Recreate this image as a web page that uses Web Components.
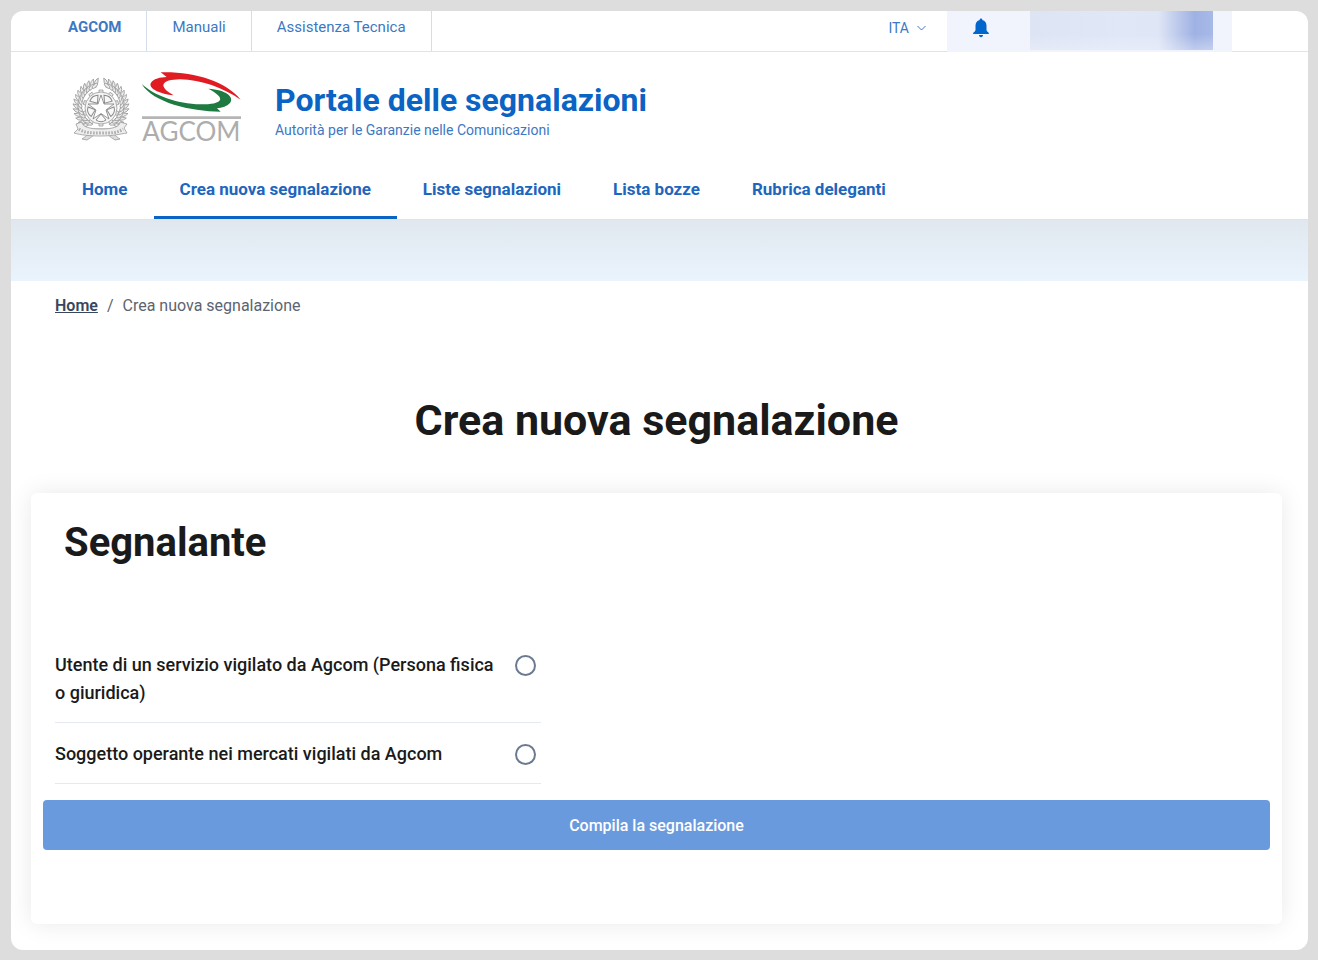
<!DOCTYPE html>
<html lang="it">
<head>
<meta charset="utf-8">
<meta name="viewport" content="width=device-width, initial-scale=1">
<title>Portale delle segnalazioni</title>
<style>
  body {
    margin: 0;
    padding: 11px 10px 10px 11px;
    min-height: 100vh;
    box-sizing: border-box;
    display: flex;
    background: #dddddd;
    color: #1a1a1a;
    font-family: Roboto, "Liberation Sans", sans-serif;
    --blue: #0b63c4;
    --soft-blue: #3d78c2;
    --line: #dbe5ef;
  }
</style>
</head>
<body>
<portal-page>
  <top-bar slot="top">
    <top-link strong>AGCOM</top-link>
    <top-link>Manuali</top-link>
    <top-link>Assistenza Tecnica</top-link>
  </top-bar>
  <brand-header slot="header">
    Portale delle segnalazioni
    <span slot="tagline">Autorità per le Garanzie nelle Comunicazioni</span>
  </brand-header>
  <main-nav slot="header">
    <nav-item>Home</nav-item>
    <nav-item active>Crea nuova segnalazione</nav-item>
    <nav-item>Liste segnalazioni</nav-item>
    <nav-item>Lista bozze</nav-item>
    <nav-item>Rubrica deleganti</nav-item>
  </main-nav>
  <bread-crumb current="Crea nuova segnalazione"></bread-crumb>
  <page-title>Crea nuova segnalazione</page-title>
  <report-card>Segnalante</report-card>
</portal-page>

<script>
class BaseElement extends HTMLElement {
  constructor() {
    super();
    this.attachShadow({ mode: "open" });
    this.shadowRoot.innerHTML = this.template();
  }
}

class PortalPage extends BaseElement {
  template() {
    return `
      <style>
        :host {
          display: flex;
          flex-direction: column;
          flex: 1;
          min-width: 0;
          background: #ffffff;
          border-radius: 12px;
          overflow: hidden;
        }
        .hero {
          height: 61px;
          border-top: 1px solid #dde4ec;
          background: linear-gradient(#e0e7ef, #eaf4fd);
        }
        main {
          flex: 1;
          padding: 0 26px 26px 20px;
        }
      </style>
      <slot name="top"></slot>
      <header><slot name="header"></slot></header>
      <div class="hero"></div>
      <main><slot></slot></main>
    `;
  }
}

class TopLink extends BaseElement {
  template() {
    return `
      <style>
        :host {
          display: flex;
          border-right: 1px solid #d3deea;
        }
        a {
          padding: 6px 25px 0;
          font-size: 15px;
          line-height: 20px;
          color: var(--soft-blue);
          text-decoration: none;
        }
        :host([strong]) a { font-weight: 700; }
      </style>
      <a href="#"><slot></slot></a>
    `;
  }
}

class TopBar extends BaseElement {
  template() {
    return `
      <style>
        :host {
          display: flex;
          height: 40px;
          border-bottom: 1px solid var(--line);
          padding: 0 76px 0 32px;
        }
        nav { display: flex; flex: 1; }
        .lang {
          display: flex;
          align-items: center;
          gap: 8px;
          height: 34px;
          padding: 0 21px;
          border: 0;
          background: none;
          font: 14px Roboto, sans-serif;
          color: var(--soft-blue);
        }
        .user {
          display: flex;
          margin-bottom: -1px;
          background: #f1f4fc;
          padding-right: 19px;
        }
        .bell {
          width: 83px;
          height: 34px;
          padding: 0 16px 0 0;
          border: 0;
          background: none;
        }
        .bell svg { display: block; margin: auto; }
        .account {
          width: 183px;
          height: 39px;
          background:
            linear-gradient(transparent 60%, rgba(241, 244, 252, 0.4)),
            linear-gradient(90deg, #dde4f4, #e0e7f7 50%, #dfe6f6 70%, #b9c6ea 82%, #9fb2e4 90%, #a8b9e7);
        }
      </style>
      <nav aria-label="Link utili"><slot></slot></nav>
      <button class="lang" type="button">ITA
        <svg width="9" height="6" viewBox="0 0 9 6" fill="none" stroke="currentColor"><path d="M.5 1l4 4 4-4"/></svg>
      </button>
      <div class="user">
        <button class="bell" type="button" aria-label="Notifiche">
          <svg width="18" height="20" viewBox="0 0 18 20" fill="#0066cc">
            <path d="M9 .5c.8 0 1.300.6 1.300 1.400 2.700.6 4.200 2.800 4.200 5.600v4.200c0 1.200.8 2 2.200 3.100.5.4.4 1.200-.4 1.200H1.700c-.8 0-.9-.8-.4-1.200 1.400-1.100 2.200-1.900 2.200-3.100V7.500c0-2.800 1.500-5 4.200-5.600C7.700 1.100 8.200.5 9 .5z"/>
            <path d="M7 17h4c0 1.300-.8 2.200-2 2.200S7 18.300 7 17z"/>
          </svg>
        </button>
        <div class="account"></div>
      </div>
    `;
  }
}

class RepublicEmblem extends BaseElement {
  // one side of the wreath; the other side is its mirror image
  leaves() {
    let out = "";
    for (let i = 0; i < 14; i++) {
      out += `<g transform="rotate(${148 - i * 10}) translate(0 -22)">
        <path d="M0 3q-5 -3 -7 -7q7 0 7 7z" transform="rotate(12)"/>
        <ellipse cy="1" rx="3.500" ry="1.500" transform="rotate(25)"/>
      </g>`;
    }
    return out;
  }

  // wedges of the wheel that show between the points of the star
  wedges() {
    let out = "";
    for (let i = 0; i < 5; i++) {
      out += `<path d="M0 -6l-5 -6q5 -3.500 10 0z" transform="translate(27 30) rotate(${36 + i * 72})"/>`;
    }
    return out;
  }

  teeth() {
    let out = "";
    for (let i = 0; i < 10; i++) {
      out += `<path d="M-2 -15v-3h4v3" transform="translate(27 30) rotate(${i * 36})"/>`;
    }
    return out;
  }

  template() {
    return `
      <style>
        :host { display: block; }
        svg { display: block; overflow: visible; }
      </style>
      <svg width="56" height="64" viewBox="0 0 56 64" fill="#ececec" stroke="#9a9a9a" stroke-width=".8" role="img" aria-label="Repubblica Italiana">
        <g transform="translate(27 28)">${this.leaves()}</g>
        <g transform="translate(27 28) scale(-1 1)">${this.leaves()}</g>
        ${this.teeth()}
        <circle cx="27" cy="30" r="16" fill="#f4f4f4"/>
        <g fill="#f8f8f8" stroke="#8c8c8c" stroke-width="1">${this.wedges()}</g>
        <path d="M27 17l3 9h10l-8 6 3 9-8-5.500-8 5.500 3-9-8-6h10z" fill="#fff" stroke="#7f7f7f"/>
        <path d="M18 51c-4 6-7 8-10 10l5 1c5-3 9-7 14-11 5 4 9 8 14 11l5-1c-3-2-6-4-10-10z" fill="#ddd"/>
        <path d="M2 46l6-2c0 5 8 7 19 7s19-2 19-7l7 2-3 4 3 5c-7 1-14 3-26 3S7 57 0 55l4-4z" fill="#eee"/>
        <path d="M5 51c5 4 12 4 22 4s17 0 22-4" fill="none" stroke="#aaa" stroke-width="3" stroke-dasharray="1.500 1.500"/>
      </svg>
    `;
  }
}

class AgcomLogo extends BaseElement {
  template() {
    return `
      <style>
        :host { display: block; }
        svg { display: block; overflow: visible; }
        text { font: 78px Lato, sans-serif; fill: #adadad; }
      </style>
      <svg width="100" height="72" viewBox="9 6 300 216" role="img" aria-label="AGCOM">
        <path fill="#e01b22" d="M68 13C165 10 262 38 308 95C254 59 190 35 126 34C70 35 58 55 107 82C58 77 28 59 40 43C48 32 66 28 86 27Z"/>
        <path fill="#1f7a41" d="M11 48C48 82 116 108 188 109C254 109 268 92 211 62C264 65 290 87 276 105C267 115 252 120 237 121L248 131C156 130 46 104 11 48Z"/>
        <path fill="#b5b5b5" d="M12 145h297v8H12z"/>
        <text x="160" y="218" text-anchor="middle">AGCOM</text>
      </svg>
    `;
  }
}

class BrandHeader extends BaseElement {
  template() {
    return `
      <style>
        :host {
          display: flex;
          align-items: flex-start;
          padding: 18px 63px 0;
        }
        republic-emblem { margin: 8px 11px 0 0; }
        agcom-logo { margin-right: 34px; }
        a {
          color: var(--blue);
          text-decoration: none;
          padding-top: 10px;
        }
        .name {
          font-size: 32px;
          line-height: 40px;
          font-weight: 700;
        }
        .tagline {
          font-size: 14px;
          line-height: 20px;
          color: var(--soft-blue);
        }
      </style>
      <republic-emblem></republic-emblem>
      <agcom-logo></agcom-logo>
      <a href="#">
        <div class="name"><slot></slot></div>
        <div class="tagline"><slot name="tagline"></slot></div>
      </a>
    `;
  }
}

class MainNav extends BaseElement {
  template() {
    return `
      <style>
        :host { display: block; padding: 16px 45px 0; }
        nav { display: flex; }
      </style>
      <nav aria-label="Principale"><slot></slot></nav>
    `;
  }
}

class NavItem extends BaseElement {
  template() {
    return `
      <style>
        :host {
          display: flex;
          border-bottom: 3px solid transparent;
        }
        :host([active]) { border-color: var(--blue); }
        a {
          padding: 19px 26px 15px;
          font-size: 17px;
          line-height: 24px;
          font-weight: 700;
          color: #1e66bd;
          text-decoration: none;
          white-space: nowrap;
        }
      </style>
      <a href="#"><slot></slot></a>
    `;
  }
}

class BreadCrumb extends BaseElement {
  template() {
    return `
      <style>
        :host { display: block; padding: 13px 24px 0; }
        ol {
          display: flex;
          margin: 0;
          padding: 0;
          list-style: none;
          font-size: 16px;
          line-height: 24px;
          color: #5b6470;
        }
        a { color: #37475d; font-weight: 600; }
        .sep { padding: 0 9px; }
      </style>
      <nav aria-label="Percorso">
        <ol>
          <li><a href="#">Home</a><span class="sep">/</span></li>
          <li class="current"></li>
        </ol>
      </nav>
    `;
  }

  connectedCallback() {
    this.shadowRoot.querySelector(".current").textContent = this.getAttribute("current");
  }
}

class PageTitle extends BaseElement {
  template() {
    return `
      <style>
        :host { display: block; padding: 72px 0 43px; }
        h1 {
          margin: 0;
          text-align: center;
          font-size: 43px;
          line-height: 60px;
          font-weight: 700;
        }
      </style>
      <h1><slot></slot></h1>
    `;
  }
}

class ReporterOptions extends BaseElement {
  template() {
    return `
      <style>
        :host { display: block; max-width: 486px; }
        fieldset { margin: 0; padding: 0; border: 0; }
        .option {
          display: flex;
          justify-content: space-between;
          align-items: flex-start;
          gap: 16px;
          padding: 17px 5px 15px 0;
          border-bottom: 1px solid #e6e9ef;
        }
        label {
          font-size: 18px;
          line-height: 28px;
          font-weight: 500;
        }
        input {
          appearance: none;
          flex: none;
          width: 21px;
          height: 21px;
          margin: 4px 0 0;
          border: 2px solid #6b7a90;
          border-radius: 50%;
          background: #ffffff;
        }
        input:checked { box-shadow: inset 0 0 0 3px #fff; background: var(--blue); }
      </style>
      <fieldset aria-label="Segnalante">
        <div class="option">
          <label for="utente">Utente di un servizio vigilato da Agcom (Persona fisica o giuridica)</label>
          <input type="radio" id="utente" name="segnalante">
        </div>
        <div class="option">
          <label for="soggetto">Soggetto operante nei mercati vigilati da Agcom</label>
          <input type="radio" id="soggetto" name="segnalante">
        </div>
      </fieldset>
    `;
  }
}

class ReportCard extends BaseElement {
  template() {
    return `
      <style>
        :host {
          display: block;
          padding: 24px 12px 74px;
          border-radius: 6px;
          background: #ffffff;
          box-shadow: 0 0 24px rgba(0, 0, 0, 0.09);
        }
        h2 {
          margin: 0 21px 65px;
          font-size: 40px;
          line-height: 52px;
          font-weight: 700;
        }
        reporter-options { margin: 0 12px 16px; }
        button {
          display: block;
          width: 100%;
          height: 50px;
          border: 0;
          border-radius: 4px;
          background: #6a9ade;
          color: #ffffff;
          font: 500 16px Roboto, sans-serif;
        }
      </style>
      <h2><slot></slot></h2>
      <reporter-options></reporter-options>
      <button type="button">Compila la segnalazione</button>
    `;
  }
}

customElements.define("portal-page", PortalPage);
customElements.define("top-link", TopLink);
customElements.define("top-bar", TopBar);
customElements.define("republic-emblem", RepublicEmblem);
customElements.define("agcom-logo", AgcomLogo);
customElements.define("brand-header", BrandHeader);
customElements.define("main-nav", MainNav);
customElements.define("nav-item", NavItem);
customElements.define("bread-crumb", BreadCrumb);
customElements.define("page-title", PageTitle);
customElements.define("reporter-options", ReporterOptions);
customElements.define("report-card", ReportCard);
</script>
</body>
</html>
